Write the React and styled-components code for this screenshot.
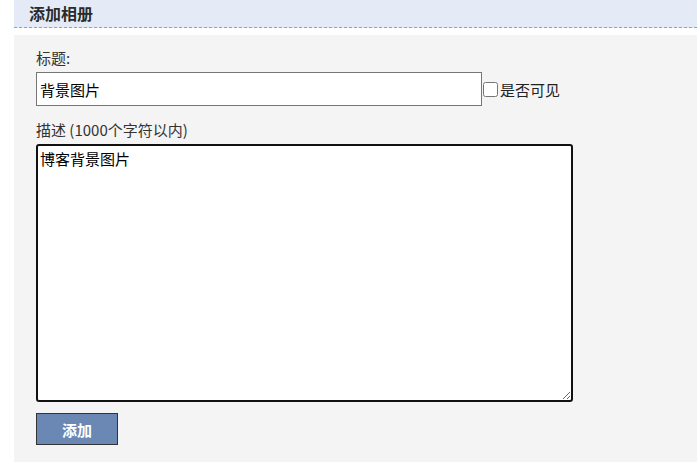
import React, { useEffect, useRef } from "react";
import styled, { createGlobalStyle } from "styled-components";

const Global = createGlobalStyle`
  html, body {
    margin: 0;
    padding: 0;
    background: #ffffff;
  }
  body {
    font-family: "Noto Sans CJK SC", "Noto Sans", sans-serif;
    color: #333333;
  }
`;

const Page = styled.div`
  padding-left: 14px;
  width: 683px;
`;

const Header = styled.h2`
  margin: 0;
  height: 27px;
  line-height: 26px;
  padding-left: 15px;
  background: #e4ebf6;
  border-bottom: 1px dashed #a0a0a0;
  font-size: 16px;
  font-weight: 700;
  color: #2a2a2a;
`;

const Panel = styled.form`
  margin-top: 7px;
  background: #f4f4f4;
  padding: 12px 22px 17px 22px;
  display: flex;
  flex-direction: column;
  align-items: flex-start;
`;

const Label = styled.label`
  display: block;
  font-size: 15px;
  line-height: 21px;
  color: #333333;
  margin-top: ${(p) => p.$top || 0}px;
  margin-bottom: 4px;
`;

const Row = styled.div`
  display: flex;
  align-items: center;
`;

const TextInput = styled.input`
  box-sizing: border-box;
  width: 446px;
  height: 34px;
  border: 1px solid #767676;
  background: #ffffff;
  padding: 0 3px;
  font-family: "Noto Sans CJK SC", "Noto Sans", sans-serif;
  font-size: 15px;
  color: #000000;
  outline: none;
`;

const Check = styled.input`
  width: 15px;
  height: 15px;
  margin: 0 2px 0 1px;
`;

const CheckText = styled.span`
  font-size: 15px;
  color: #222222;
`;

const Area = styled.textarea`
  box-sizing: border-box;
  width: 537px;
  height: 258px;
  border: 2px solid #111111;
  border-radius: 3px;
  padding: 2px 2px;
  background: #ffffff;
  font-family: "Noto Sans CJK SC", "Noto Sans", sans-serif;
  font-size: 15px;
  line-height: 22px;
  color: #000000;
  outline: none;
  caret-color: #000000;
`;

const Button = styled.button`
  margin-top: 11px;
  box-sizing: border-box;
  width: 82px;
  height: 32px;
  background: #6b87b3;
  border: 1px solid #333333;
  color: #ffffff;
  font-family: "Noto Sans CJK SC", "Noto Sans", sans-serif;
  font-size: 15px;
  font-weight: 700;
  padding: 0;
  cursor: pointer;
`;

export default function App() {
  const areaRef = useRef(null);
  useEffect(() => {
    const el = areaRef.current;
    if (el) {
      el.focus();
      el.setSelectionRange(2, 2);
    }
  }, []);
  return (
    <Page>
      <Global />
      <Header>添加相册</Header>
      <Panel onSubmit={(e) => e.preventDefault()}>
        <Label htmlFor="title">标题:</Label>
        <Row>
          <TextInput id="title" type="text" defaultValue="背景图片" />
          <Check type="checkbox" id="visible" />
          <CheckText>是否可见</CheckText>
        </Row>
        <Label htmlFor="desc" $top={13}>描述 (1000个字符以内)</Label>
        <Area id="desc" ref={areaRef} defaultValue="博客背景图片" />
        <Button type="submit">添加</Button>
      </Panel>
    </Page>
  );
}
